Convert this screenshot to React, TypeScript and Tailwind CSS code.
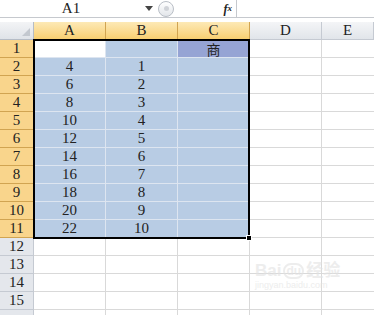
import React from "react";

const serif = { fontFamily: '"Liberation Serif", "Noto Sans CJK SC", serif' };

const colA = ["", "4", "6", "8", "10", "12", "14", "16", "18", "20", "22"];
const colB = ["", "1", "2", "3", "4", "5", "6", "7", "8", "9", "10"];

export default function App() {
  const rows = Array.from({ length: 16 }, (_, i) => i + 1);
  return (
    <div className="relative w-[374px] h-[315px] overflow-hidden bg-white text-[#222]" style={serif}>
      {/* formula bar */}
      <div className="flex h-[18px] border-b border-[#c6c9ce] bg-white">
        <div className="w-[140px] flex items-center justify-center text-[15px] leading-none pl-[2px]">A1</div>
        <div className="w-[18px] flex items-center justify-center">
          <svg width="8" height="5" viewBox="0 0 8 5"><path d="M0 0h8L4 5z" fill="#444" /></svg>
        </div>
        <div className="w-[24px] flex items-center">
          <div className="w-[16px] h-[16px] rounded-full border border-[#b9bec6] bg-gradient-to-b from-white to-[#e3e6ea] flex items-center justify-center">
            <div className="w-[5px] h-[5px] rounded-full bg-[#d0d3d8]" />
          </div>
        </div>
        <div className="w-[55px] flex items-center justify-end pr-[4px] border-r border-[#c6c9ce] text-[12px] italic font-bold">
          f<span className="text-[9px]">x</span>
        </div>
        <div className="flex-1" />
      </div>
      <div className="h-[4px] bg-white" />
      {/* grid */}
      <div className="grid grid-cols-[34px_72px_72px_72px_72px_1fr] auto-rows-[18px] text-[15px]">
        <div className="border-r border-b border-[#b5bcc6] bg-gradient-to-b from-[#f3f4f6] to-[#dfe3e8] relative">
          <svg className="absolute right-[3px] bottom-[3px]" width="8" height="8" viewBox="0 0 8 8"><path d="M8 0V8H0z" fill="#c3c8cf" /></svg>
        </div>
        {["A", "B", "C"].map((c) => (
          <div key={c} className="border-r border-b border-[#d1a451] bg-gradient-to-b from-[#fde9b6] to-[#f8cf70] flex items-center justify-center leading-none">{c}</div>
        ))}
        {["D", "E"].map((c) => (
          <div key={c} className="border-r border-b border-[#c5cad2] bg-gradient-to-b from-[#f4f5f7] to-[#e1e5ea] flex items-center justify-center leading-none">{c}</div>
        ))}
        {rows.map((r) => {
          const sel = r <= 11;
          return (
            <React.Fragment key={r}>
              <div className={`border-r border-b flex items-center justify-center leading-none ${sel ? "border-[#d1a451] bg-[#f9d58c]" : "border-[#c5cad2] bg-[#e4e7ec]"}`}>{r <= 15 ? r : ""}</div>
              <div className={`border-r border-b flex items-center justify-center leading-none ${r === 1 ? "bg-white border-[#dde5f0]" : sel ? "bg-[#b8cce4] border-[#dde5f0]" : "border-[#d9d9d9]"}`}>{sel ? colA[r - 1] : ""}</div>
              <div className={`border-r border-b flex items-center justify-center leading-none ${sel ? "bg-[#b8cce4] border-[#dde5f0]" : "border-[#d9d9d9]"}`}>{sel ? colB[r - 1] : ""}</div>
              <div className={`border-r border-b flex items-center justify-center leading-none ${r === 1 ? "bg-[#96a4d4] border-[#dde5f0] text-[14px]" : sel ? "bg-[#b8cce4] border-[#dde5f0]" : "border-[#d9d9d9]"}`} style={r === 1 ? { fontFamily: '"Noto Sans CJK SC", sans-serif' } : undefined}>{r === 1 ? "商" : ""}</div>
              <div className="border-r border-b border-[#d9d9d9]" />
              <div className="border-b border-[#d9d9d9]" />
            </React.Fragment>
          );
        })}
      </div>
      {/* selection outline */}
      <div className="absolute left-[33px] top-[39px] w-[217px] h-[200px] border-2 border-black pointer-events-none" />
      <div className="absolute left-[246px] top-[235px] w-[6px] h-[6px] bg-black border border-white" />
      {/* watermark */}
      <div className="absolute left-[255px] top-[262px] flex flex-col items-start pointer-events-none opacity-60">
        <div className="flex items-center gap-[2px] text-[#e2e2e2] text-[17px] font-bold leading-none" style={{ fontFamily: '"Liberation Sans", "Noto Sans CJK SC", sans-serif' }}>
          <span>Bai</span>
          <span className="rounded-full border-2 border-[#e2e2e2] px-[1px] text-[12px]">du</span>
          <span>经验</span>
        </div>
        <div className="text-[#e2e2e2] text-[9px] leading-none mt-[2px]" style={{ fontFamily: '"Liberation Sans", sans-serif' }}>jingyan.baidu.com</div>
      </div>
    </div>
  );
}
